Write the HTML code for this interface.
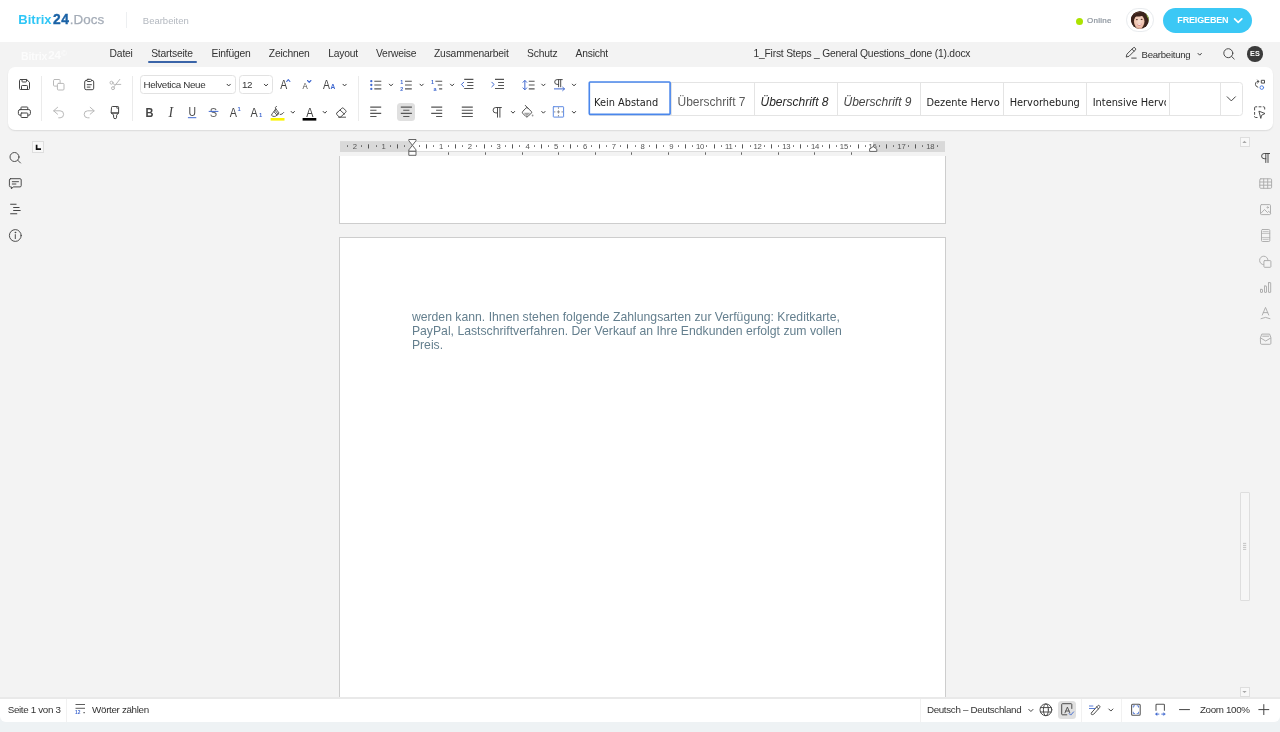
<!DOCTYPE html>
<html lang="de">
<head>
<meta charset="utf-8">
<title>1_First Steps _ General Questions_done (1).docx</title>
<style>
*{box-sizing:border-box;margin:0;padding:0}
html,body{width:1280px;height:732px;overflow:hidden;background:#eef2f4;font-family:"Liberation Sans",sans-serif;color:#333}
body{position:relative;will-change:transform}
.t{position:absolute;white-space:nowrap;line-height:1}
#hdr{position:absolute;left:0;top:0;width:1280px;height:42px;background:#fff}
#editor{position:absolute;left:0;top:42px;width:1280px;height:680px;background:#f3f3f3;border-radius:0 0 6px 6px;overflow:hidden}
#tb{position:absolute;left:8px;top:66.5px;width:1264.5px;height:63px;background:#fff;border-radius:7px;box-shadow:0 1px 1.5px rgba(0,0,0,.10)}
#status{position:absolute;left:0;top:697px;width:1280px;height:25px;background:#fff;border-top:2px solid #e9e9e9;border-radius:0 0 6px 6px}
.page{position:absolute;left:339px;width:606.5px;background:#fff;border:1px solid #cdcdcd}
.mi{font-size:10.3px;letter-spacing:-.19px;color:#333;top:49px}
.ui{font-size:9.8px;letter-spacing:-.33px;color:#333}
.box{position:absolute;border:1px solid #e2e2e2;border-radius:3.5px;background:#fff}
.sep{position:absolute;width:1px;background:#ebebeb}
.gal{position:absolute;left:588.5px;top:81.5px;width:654.5px;height:34px;border:1px solid #e4e4e4;border-radius:0 3.5px 3.5px 0;background:#fff}
.gc{position:absolute;top:81.5px;height:34px;border-left:1px solid #e4e4e4;overflow:hidden}
.gc span{position:absolute;left:5.5px;top:13px;white-space:nowrap;line-height:14px}
.g1 span{top:14.3px}
.g1{font-family:"DejaVu Sans Condensed","DejaVu Sans","Liberation Sans",sans-serif;font-size:10.9px;color:#222}
.g2{font-family:"Liberation Sans",sans-serif;font-size:12px}
svg{position:absolute;left:0;top:0;overflow:visible}
svg text{font-family:"Liberation Sans",sans-serif}
</style>
</head>
<body>
<div id="hdr"></div>
<div id="editor"></div>
<!-- header -->
<div class="t" id="logo" style="left:18.3px;top:12.8px;font-size:13px;font-weight:bold"><span style="color:#2fc6f6">Bitrix</span><span style="color:#1a62a6;font-size:13.8px;letter-spacing:.5px;margin-left:1.5px;-webkit-text-stroke:.35px #1a62a6">24</span><span style="color:#a4acb7;font-weight:normal;margin-left:.3px;font-size:13.4px;letter-spacing:.1px;-webkit-text-stroke:.25px #a4acb7">.Docs</span></div>
<div class="sep" style="left:126px;top:12px;height:16px;background:#edeff1"></div>
<div class="t" style="left:142.8px;top:15.7px;font-size:9.5px;color:#b3b8bf">Bearbeiten</div>
<div style="position:absolute;left:1076px;top:18px;width:7px;height:7px;border-radius:50%;background:#ace300"></div>
<div class="t" style="left:1087px;top:16.6px;font-size:8px;letter-spacing:.28px;-webkit-text-stroke:.22px #8e969f;color:#8e969f">Online</div>
<div style="position:absolute;left:1125.6px;top:8px;width:28.3px;height:23.7px;border-radius:11.85px;border:1.2px solid #e8ebee;background:#fff"></div>
<div style="position:absolute;left:1163px;top:8px;width:89px;height:24.5px;border-radius:12.5px;background:#3bc8f5"></div>
<div class="t" style="left:1177.3px;top:15.8px;font-size:9px;font-weight:bold;letter-spacing:-.15px;color:#fff">FREIGEBEN</div>
<!-- menu bar -->
<div class="t" style="left:21px;top:49.700px;font-size:10.5px;font-weight:bold;color:#fcfcfc;letter-spacing:-.1px">Bitrix<span style="font-size:11.5px;margin-left:1px">24</span><span style="font-size:7.5px;font-weight:normal;vertical-align:3.5px;margin-left:.5px">©</span></div>
<div class="t mi" style="left:109.6px">Datei</div>
<div class="t mi" style="left:151.2px">Startseite</div>
<div style="position:absolute;left:148px;top:61px;width:48.7px;height:2px;border-radius:1px;background:#3a64a8"></div>
<div class="t mi" style="left:211.5px">Einfügen</div>
<div class="t mi" style="left:268.8px">Zeichnen</div>
<div class="t mi" style="left:328.2px">Layout</div>
<div class="t mi" style="left:376px">Verweise</div>
<div class="t mi" style="left:434px">Zusammenarbeit</div>
<div class="t mi" style="left:527px">Schutz</div>
<div class="t mi" style="left:575.5px">Ansicht</div>
<div class="t mi" style="left:753.5px;letter-spacing:-.21px">1_First Steps _ General Questions_done (1).docx</div>
<div class="t mi" style="left:1141.6px;top:49.5px;font-size:9.6px;letter-spacing:-.27px">Bearbeitung</div>
<div style="position:absolute;left:1247px;top:46px;width:15.6px;height:15.6px;border-radius:50%;background:#3b3b3b"></div>
<div class="t" style="left:1250.1px;top:50.4px;font-size:7.3px;font-weight:bold;color:#fff">ES</div>
<!-- toolbar -->
<div id="tb"></div>
<div class="sep" style="left:41px;top:75.5px;height:45.5px"></div>
<div class="sep" style="left:132px;top:75.5px;height:45.5px"></div>
<div class="sep" style="left:358px;top:75.5px;height:45.5px"></div>
<div class="box" style="left:140px;top:75px;width:95.5px;height:19px"></div>
<div class="box" style="left:238.7px;top:75px;width:34px;height:19px"></div>
<div class="t ui" style="left:143.5px;top:79.7px">Helvetica Neue</div>
<div class="t ui" style="left:242px;top:79.7px">12</div>
<div style="position:absolute;left:397px;top:103px;width:18.2px;height:18px;border-radius:3.5px;background:#e0e0e0"></div>
<!-- style gallery -->
<div class="gal"></div>
<div class="gc g1" style="left:588.5px;width:82.5px;border:none"><span>Kein Abstand</span></div>
<div class="gc g2" style="left:671px;width:83.4px;color:#5c5c5c"><span>Überschrift 7</span></div>
<div class="gc g2" style="left:754px;width:83.4px;color:#262626;font-style:italic"><span>Überschrift 8</span></div>
<div class="gc g2" style="left:837px;width:83.4px;color:#444;font-style:italic"><span>Überschrift 9</span></div>
<div class="gc g1" style="left:920px;width:79.5px"><span>Dezente Hervorhebung</span></div>
<div class="sep" style="left:1003.2px;top:81.5px;height:34px;background:#e4e4e4"></div>
<div class="gc g1" style="left:1003.2px;width:83.4px"><span>Hervorhebung</span></div>
<div class="gc g1" style="left:1086.2px;width:80.3px"><span>Intensive Hervorhebung</span></div>
<div class="sep" style="left:1169.2px;top:81.5px;height:34px;background:#e4e4e4"></div>
<div class="sep" style="left:1220px;top:81.5px;height:34px;background:#e4e4e4"></div>

<!-- document area -->
<div style="position:absolute;left:32px;top:141px;width:12px;height:11.5px;border:1px solid #dedede;background:#f8f8f8"></div>
<div class="page" style="top:152px;height:71.8px;border-top:none"></div>
<div class="page" style="top:237px;height:461px;border-bottom:none"></div>
<div style="position:absolute;left:339px;top:152px;width:607px;height:4px;background:#f3f3f3"></div>
<div id="ruler" style="position:absolute;left:340px;top:141px;width:605px;height:11px;background:#fff;border:1px solid #dcdcdc;border-left:none;border-right:none"></div>
<div style="position:absolute;left:340px;top:141.5px;width:72.3px;height:10.3px;background:#d9d9d9"></div>
<div style="position:absolute;left:873px;top:141.5px;width:72px;height:10.3px;background:#d9d9d9"></div>
<div class="t" id="doctext" style="left:411.9px;top:311.1px;font-size:12.22px;line-height:13.75px;color:#647f8e;white-space:normal;width:470px">werden kann. Ihnen stehen folgende Zahlungsarten zur Verfügung: Kreditkarte,<br>PayPal, Lastschriftverfahren. Der Verkauf an Ihre Endkunden erfolgt zum vollen<br>Preis.</div>
<!-- scrollbar -->
<div style="position:absolute;left:1239.5px;top:137px;width:10px;height:9.5px;border:1px solid #dedede;background:#f8f8f8"></div>
<div style="position:absolute;left:1239.5px;top:686.6px;width:10px;height:10px;border:1px solid #dedede;background:#f8f8f8"></div>
<div style="position:absolute;left:1239.5px;top:491.5px;width:10px;height:109.5px;border:1px solid #dedede;background:#f6f6f6;border-radius:1px"></div>
<!-- status bar -->
<div id="status"></div>
<div class="sep" style="left:65.5px;top:698.5px;height:23.5px;background:#f1f1f1"></div>
<div class="sep" style="left:919.5px;top:698.5px;height:23.5px;background:#f1f1f1"></div>
<div class="sep" style="left:1081px;top:698.5px;height:23.5px;background:#f1f1f1"></div>
<div class="sep" style="left:1121px;top:698.5px;height:23.5px;background:#f1f1f1"></div>
<div class="t ui" style="left:7.7px;top:704.9px">Seite 1 von 3</div>
<div class="t ui" style="left:92.1px;top:704.9px">Wörter zählen</div>
<div class="t ui" style="left:926.9px;top:704.9px">Deutsch – Deutschland</div>
<div class="t ui" style="left:1199.9px;top:704.9px">Zoom 100%</div>
<div style="position:absolute;left:1058.4px;top:700.8px;width:18px;height:18px;border-radius:3.5px;background:#e0e0e0"></div>
<svg width="1280" height="732" viewBox="0 0 1280 732">
<g font-size="7.7" fill="#555" letter-spacing="-.25"><text x="354.8" y="148.9" text-anchor="middle">2</text><text x="383.5" y="148.9" text-anchor="middle">1</text><text x="441.1" y="148.9" text-anchor="middle">1</text><text x="469.8" y="148.9" text-anchor="middle">2</text><text x="498.6" y="148.9" text-anchor="middle">3</text><text x="527.4" y="148.9" text-anchor="middle">4</text><text x="556.1" y="148.9" text-anchor="middle">5</text><text x="584.9" y="148.9" text-anchor="middle">6</text><text x="613.7" y="148.9" text-anchor="middle">7</text><text x="642.5" y="148.9" text-anchor="middle">8</text><text x="671.2" y="148.9" text-anchor="middle">9</text><text x="700.0" y="148.9" text-anchor="middle">10</text><text x="728.8" y="148.9" text-anchor="middle">11</text><text x="757.5" y="148.9" text-anchor="middle">12</text><text x="786.3" y="148.9" text-anchor="middle">13</text><text x="815.1" y="148.9" text-anchor="middle">14</text><text x="843.9" y="148.9" text-anchor="middle">15</text><text x="872.6" y="148.9" text-anchor="middle">16</text><text x="901.4" y="148.9" text-anchor="middle">17</text><text x="930.2" y="148.9" text-anchor="middle">18</text></g>
<path d="M347.5 145.3v1.5M361.5 145.3v1.5M368.5 144.3v4.2M376.5 145.3v1.5M390.5 145.3v1.5M397.5 144.3v4.2M404.5 145.3v1.5M419.5 145.3v1.5M426.5 144.3v4.2M433.5 145.3v1.5M448.5 145.3v1.5M455.5 144.3v4.2M462.5 145.3v1.5M476.5 145.3v1.5M484.5 144.3v4.2M491.5 145.3v1.5M505.5 145.3v1.5M512.5 144.3v4.2M519.5 145.3v1.5M534.5 145.3v1.5M541.5 144.3v4.2M548.5 145.3v1.5M563.5 145.3v1.5M570.5 144.3v4.2M577.5 145.3v1.5M591.5 145.3v1.5M599.5 144.3v4.2M606.5 145.3v1.5M620.5 145.3v1.5M627.5 144.3v4.2M635.5 145.3v1.5M649.5 145.3v1.5M656.5 144.3v4.2M663.5 145.3v1.5M678.5 145.3v1.5M685.5 144.3v4.2M692.5 145.3v1.5M706.5 145.3v1.5M714.5 144.3v4.2M721.5 145.3v1.5M735.5 145.3v1.5M742.5 144.3v4.2M750.5 145.3v1.5M764.5 145.3v1.5M771.5 144.3v4.2M778.5 145.3v1.5M793.5 145.3v1.5M800.5 144.3v4.2M807.5 145.3v1.5M822.5 145.3v1.5M829.5 144.3v4.2M836.5 145.3v1.5M850.5 145.3v1.5M858.5 144.3v4.2M865.5 145.3v1.5M879.5 145.3v1.5M886.5 144.3v4.2M893.5 145.3v1.5M908.5 145.3v1.5M915.5 144.3v4.2M922.5 145.3v1.5M937.5 145.3v1.5" stroke="#555" stroke-width="1" fill="none" stroke-linecap="butt"/>
<path d="M448.5 152.3v2.5M485.5 152.3v2.5M522.5 152.3v2.5M558.5 152.3v2.5M595.5 152.3v2.5M631.5 152.3v2.5M668.5 152.3v2.5M705.5 152.3v2.5M741.5 152.3v2.5M778.5 152.3v2.5M814.5 152.3v2.5M851.5 152.3v2.5" stroke="#555" stroke-width=".9" fill="none"/>
<g stroke="#555" stroke-width=".9" fill="#fff" stroke-linejoin="round">
<path d="M408.8 139.5h7.2v1.2l-3.6 4.6l-3.6-4.6z"/>
<path d="M408.8 151.3v-1.4l3.6-4.6l3.6 4.6v1.4z"/>
<path d="M408.8 151.3h7.2v4h-7.2z"/>
<path d="M869.6 151.4v-2.3l3.6-2.6l3.6 2.6v2.3z"/>
</g>
</svg><svg width="1280" height="732" viewBox="0 0 1280 732" fill="none" stroke-linecap="round" stroke-linejoin="round">
<defs>
<path id="chv" d="M-1.65 -.85L0 .85L1.65 -.85" stroke="#3a3a3a" stroke-width="1" fill="none"/>
</defs>
<!-- header: avatar photo + button chevron -->
<defs>
<clipPath id="avc"><circle cx="1139.850" cy="20.050" r="8.900"/></clipPath>
<filter id="avb" x="-20%" y="-20%" width="140%" height="140%"><feGaussianBlur stdDeviation=".55"/></filter>
<radialGradient id="skin" cx=".5" cy=".45" r=".6"><stop offset="0" stop-color="#f7ddd0"/><stop offset=".7" stop-color="#eec3ae"/><stop offset="1" stop-color="#d39d86"/></radialGradient>
</defs>
<g clip-path="url(#avc)" stroke="none">
<rect x="1130" y="10" width="20" height="20" fill="#3b241b"/>
<g filter="url(#avb)">
<path d="M1144 10h7v9.500c-1.500-3.500-3.500-6.500-7-9.500z" fill="#7fae3a"/>
<path d="M1146.800 12.500c2 2.500 2.300 6.500 1.500 10.500c-1.300-3.500-2-7-1.500-10.500z" fill="#a8cf5a"/>
<ellipse cx="1139.200" cy="21.600" rx="5.300" ry="6.800" fill="url(#skin)"/>
<path d="M1136.500 27h5.500l1 4h-8z" fill="#e3b29c"/>
<path d="M1131 22c-1-6 2-10.500 8.500-10.800c5.500-.2 8.500 4 8.300 11c-1-4-2.300-6-4-7.300c-2.300 1.500-5.500 1.800-8 1.500c-1.500 1.300-2.300 3-2.800 6.600z" fill="#3b241b"/>
<path d="M1144.300 17c1.800 2 2 6.500.3 10.500l3.500-2l1-8z" fill="#3b241b"/>
<path d="M1133.300 20c-.6 2.500-.3 5 .8 7l-3-1.500z" fill="#3b241b"/>
<path d="M1144.300 11.800A8.900 8.900 0 0 1 1148.800 21.500C1148 17.500 1146.800 14.500 1144.300 11.800z" fill="#8cbf3f"/>
<path d="M1133.500 14.500q3-3 7.500-2.300q-4.500.3-7.500 2.300z" fill="#6b4a3c"/>
<ellipse cx="1136.900" cy="19.600" rx="1" ry=".55" fill="#5a3a30"/>
<ellipse cx="1141.600" cy="19.400" rx="1" ry=".55" fill="#5a3a30"/>
<path d="M1136.800 23.700q2.600 1.300 5.200-.2q-.6 2.400-2.700 2.500q-1.900 0-2.500-2.300z" fill="#d98c8c"/>
<path d="M1137.300 23.900q2.200.9 4.200-.1q-.8 1.200-2.100 1.200q-1.300 0-2.100-1.100z" fill="#fff"/>
</g>
</g>
<path d="M1234.6 18.800l3.600 3.600l3.600-3.600" stroke="#fff" stroke-width="1.700"/>
<!-- menubar right -->
<g stroke="#444" stroke-width=".95">
<path d="M1126.300 56.700l.6-2.500l6.300-6.300a1.200 1.200 0 0 1 1.800 0l.3.300a1.200 1.200 0 0 1 0 1.800l-6.300 6.300l-2.500.600z"/>
<path d="M1132 49.200l2 2"/>
<path d="M1131.700 58.100h4.500"/>
<circle cx="1228.300" cy="53.200" r="4.500"/>
<path d="M1231.600 56.500l2.600 2.500"/>
</g>
<use href="#chv" x="1199.7" y="54.300"/>
<!-- ===== toolbar row 1 left ===== -->
<g stroke="#444" stroke-width="1">
<!-- save -->
<path d="M20.500 79.500h6.200l2.800 2.800v6.200a1 1 0 0 1 -1 1h-8a1 1 0 0 1 -1 -1v-8a1 1 0 0 1 1 -1z"/>
<path d="M22 79.700v1.600a.7.700 0 0 0 .7.700h3.100a.7.700 0 0 0 .7-.7v-1.600"/>
<path d="M21.500 89.300v-3a.8.800 0 0 1 .8-.8h4.400a.8.800 0 0 1 .8.800v3"/>
<!-- print -->
<rect x="18.400" y="109.600" width="12" height="5.600" rx="1.600"/>
<path d="M21 109.400v-1.700a.7.700 0 0 1 .7-.7h5.400a.7.700 0 0 1 .7.700v1.700"/>
<rect x="21" y="113" width="6.800" height="4.500" rx=".7" fill="#fff"/>
<!-- paste -->
<rect x="84.700" y="80.400" width="9" height="9.300" rx="1.500"/>
<rect x="86.900" y="79.300" width="4.600" height="2.200" rx="1" fill="#fff"/>
<path d="M87.200 84.700h4.200M87.200 87.100h2.900"/>
<!-- format painter -->
<path d="M111.500 107.300a.8.800 0 0 1 .8-.8h5.500a.8.800 0 0 1 .8.800v5.700h-7.100z"/>
<path d="M116.800 106.600v1.600h1.700" stroke-width=".8"/>
<path d="M111.500 113h7.100l-2 2.200v2a1.500 1.500 0 0 1 -3 0v-2z"/>
</g>
<g stroke="#b9b9b9" stroke-width="1">
<!-- copy -->
<rect x="53.500" y="79.500" width="6.600" height="6.600" rx="1"/>
<rect x="57.400" y="83.400" width="6.600" height="6.600" rx="1" fill="#fff"/>
<!-- cut -->
<circle cx="111.500" cy="82.700" r="1.500"/>
<circle cx="113" cy="88.200" r="1.500"/>
<path d="M113.800 87l6-7.600M113 83.600l1.200.8h6.600"/>
<!-- undo -->
<path d="M57.600 107.300l-4 3.500l4 3.400"/>
<path d="M53.800 110.800h6.300a3.500 3.500 0 0 1 0 7h-1.400"/>
<!-- redo -->
<path d="M90.200 107.300l4 3.500l-4 3.400"/>
<path d="M94 110.800h-6.300a3.500 3.500 0 0 0 0 7h1.400"/>
</g>
<!-- font chevrons -->
<use href="#chv" x="228.700" y="85.100"/>
<use href="#chv" x="266" y="85.100"/>
<use href="#chv" x="344.600" y="85.100"/>
<use href="#chv" x="292.800" y="112.300"/>
<use href="#chv" x="324.800" y="112.300"/>
<!-- font size inc/dec/case -->
<g fill="#444" stroke="none" font-size="12">
<text transform="translate(280.3 88.900) scale(.87 1)">A</text>
<text transform="translate(302.400 88.600) scale(.9 1)" font-size="8.700">A</text>
<text transform="translate(323 88.900) scale(.87 1)">A</text>
<text x="330.600" y="88.900" font-size="7.200" fill="#4069d0" font-weight="bold" transform="translate(330.600 88.900) scale(.92 1) translate(-330.600 -88.900)">A</text>
</g>
<g stroke="#4069d0" stroke-width="1.150">
<path d="M286.700 81.500l1.600-1.900l1.600 1.900"/>
<path d="M307.500 80.500l1.700 1.800l1.700-1.800"/>
</g>
<!-- B I U S A A -->
<g fill="#444" stroke="none" font-size="12.300">
<text transform="translate(145.600 116.500) scale(.88 1)" font-weight="bold" font-size="12.500">B</text>
<text x="170.800" y="116.500" text-anchor="middle" style="font-family:'Liberation Serif',serif;font-style:italic;font-size:13.8px">I</text>
<text transform="translate(192.200 116.300) scale(.85 1)" text-anchor="middle">U</text>
<text transform="translate(213.500 116.500) scale(.9 1)" text-anchor="middle" fill="#666">S</text>
<text transform="translate(229.800 116.500) scale(.88 1)">A</text>
<text transform="translate(250.600 116.500) scale(.88 1)">A</text>
<text transform="translate(309.800 116.500) scale(.88 1)" text-anchor="middle">A</text>
<text x="237.500" y="111" font-size="5.800" font-weight="bold" fill="#4069d0">1</text>
<text x="259" y="116.900" font-size="5.800" font-weight="bold" fill="#4069d0">1</text>
</g>
<path d="M188.300 117.700h7.600M209.100 111.400h8.900" stroke="#4069d0" stroke-width="1"/>
<rect x="270.600" y="118" width="13.900" height="2.600" fill="#fbf300"/>
<rect x="302.600" y="118" width="13.700" height="2.600" fill="#000"/>
<!-- highlighter -->
<g stroke="#444" stroke-width=".9">
<path d="M276.500 106.300L275.300 107.700L276 109.100"/>
<path d="M276 109.100L279.100 113L277 115.200C275.500 116.800 273 117 271.400 115.200C272 113.800 273 112.500 273.900 111.600Z"/>
<path d="M273.900 111.600L277 115.200M275 110.300L278.100 114.100"/>
<path d="M280.200 114.500C281.500 114.600 282.800 113.600 283.700 112.500"/>
<!-- eraser -->
<rect x="-4.600" y="-2.800" width="9.200" height="5.600" rx="1.300" transform="translate(341.300 112.600) rotate(-43)"/>
<path d="M340.200 110.200L344.400 114.100M338.600 117.200h7"/>
</g>
<!-- ===== lists ===== -->
<g stroke="#555" stroke-width="1.100" stroke-linecap="butt">
<path d="M374.300 81.200h7M374.300 85h7M374.300 88.900h7"/>
<path d="M405 81.200h6.800M405 85h6.800M405 88.900h6.800"/>
<path d="M435.400 81.200h6.800M437.800 85h4.400M439.100 88.900h3.100"/>
<path d="M464.200 79.400h9.200M467.200 82.500h6.200M467.200 85.500h6.200M464.200 88.500h9.200"/>
<path d="M495 79.400h9M498.100 82.500h5.900M498.100 85.500h5.900M495 88.500h9"/>
<path d="M528.800 81.200h5.800M528.800 85h5.800M528.800 88.900h5.800"/>
<!-- align -->
<path d="M370.200 107.100h11M370.200 110.300h6.300M370.200 113.400h11M370.200 116.500h6.300"/>
<path d="M400.800 107.100h11.100M403.200 110.300h6.200M400.800 113.400h11.100M403.200 116.500h6.200"/>
<path d="M431.200 107.100h11M436.100 110.300h6.100M431.200 113.400h11M436.100 116.500h6.100"/>
<path d="M461.800 107.100h11M461.800 110.300h11M461.800 113.400h11M461.800 116.500h11"/>
</g>
<g fill="#4069d0" stroke="none">
<circle cx="371.300" cy="81.200" r="1.150"/><circle cx="371.300" cy="85" r="1.150"/><circle cx="371.300" cy="88.900" r="1.150"/>
<text x="400.300" y="83.500" font-size="5.300" font-weight="bold">1</text>
<text x="400.300" y="90.700" font-size="5.300" font-weight="bold">2</text>
<text x="431.100" y="83.500" font-size="5.300" font-weight="bold">1</text>
<text x="433.400" y="90.500" font-size="5.400" font-weight="bold">a</text>
</g>
<g stroke="#4069d0" stroke-width="1">
<path d="M463.700 82.200l-2.300 2.300l2.300 2.300"/>
<path d="M491.800 82.200l2.300 2.300l-2.300 2.300"/>
<path d="M524.850 80.800v8.600M523 82.300l1.850-1.900l1.850 1.900M523 87.900l1.850 1.900l1.850-1.900"/>
<path d="M554.400 88.900h10M562.700 87.200l1.800 1.700l-1.800 1.700"/>
<rect x="553.300" y="106.700" width="10.300" height="10.400" rx=".5" stroke="#5584e0" stroke-width=".95"/>
</g>
<use href="#chv" x="391" y="85"/>
<use href="#chv" x="421.600" y="85"/>
<use href="#chv" x="452.100" y="85"/>
<use href="#chv" x="543.400" y="85"/>
<use href="#chv" x="574" y="85"/>
<use href="#chv" x="513" y="112.300"/>
<use href="#chv" x="543.400" y="112.300"/>
<use href="#chv" x="574" y="112.300"/>
<!-- pilcrows -->
<g stroke="#444" stroke-width=".95">
<path d="M562.300 79.600h-5.200a2.400 2.400 0 0 0 0 4.800h1.500M558.600 79.600v7.200M560.700 79.600v7.200"/>
<path d="M501.400 107.500h-5.600a2.700 2.700 0 0 0 0 5.400h1.700M497.500 107.500v9.700M499.900 107.500v9.700"/>
<!-- bucket -->
<path d="M526.100 107.900a1.100 1.100 0 0 1 1.600 0l3.600 3.600a1.100 1.100 0 0 1 0 1.600l-3.500 3.500a1.300 1.300 0 0 1 -1.800 0l-3.300-3.300a1.300 1.300 0 0 1 0-1.800z"/>
<path d="M525.300 105.400l2.800 3"/>
<path d="M523.800 112.800h6.500l-3 3a.8.800 0 0 1 -1 0z" fill="#a5a5a5" stroke="none"/>
<circle cx="532.600" cy="115.500" r=".9" fill="#999" stroke="none"/>
</g>
<path d="M558.450 107.300v1.500M558.450 110.300v3.200M558.450 115v1.500M553.900 111.900h1.500M556.900 111.900h3.100M561.500 111.900h1.500" stroke="#777" stroke-width=".8" stroke-linecap="butt"/>
<rect x="589.300" y="82" width="80.800" height="32.300" rx=".8" stroke="#4a87ec" stroke-width="1.650" fill="none"/>
<!-- gallery chevron + right icons -->
<path d="M1227.200 96.800l4.100 4.100l4.100-4.100" stroke="#444" stroke-width="1"/>
<g stroke="#444" stroke-width=".95">
<path d="M1257.800 87.200a3.100 3.100 0 0 1 -.8-5.700h1.400M1257.500 80l1.500 1.500l-1.500 1.500"/>
<rect x="1261.700" y="80.300" width="2.800" height="2.800"/>
<circle cx="1261.800" cy="87.600" r="1.800" stroke="#4a7be0"/>
<path d="M1254.600 110v-2.200a1 1 0 0 1 1-1h1.200M1259 106.800h2M1263.200 106.800h.5a1 1 0 0 1 1 1v1.300M1254.600 112.400v2M1254.600 116.500v0a1 1 0 0 0 1 1h1.500"/>
<path d="M1259.300 111.300l5.700 2.200l-3.500 1.800l-.6 2.700z"/>
</g>
</svg>
<svg width="1280" height="732" viewBox="0 0 1280 732" fill="none" stroke-linecap="round" stroke-linejoin="round">
<!-- tab L -->
<path d="M36.600 144.800v4.300h4.400" stroke="#111" stroke-width="1.700" stroke-linecap="butt" stroke-linejoin="miter"/>
<!-- left sidebar -->
<g stroke="#444" stroke-width=".95">
<circle cx="14.500" cy="157" r="4.500"/><path d="M17.800 160.300l2.700 2.700"/>
<path d="M10.600 178.700h9.400a1.200 1.200 0 0 1 1.200 1.200v5.800a1.200 1.200 0 0 1 -1.200 1.200h-6.800l-1.800 2v-2h-.8a1.200 1.200 0 0 1 -1.200-1.200v-5.800a1.200 1.200 0 0 1 1.200-1.200z"/>
<path d="M12.300 181.700h6.200M12.300 184h3.600"/>
<path d="M10.200 204.300h6.300M13.200 207.400h6.300M13.200 210.500h7.400M10.200 213.700h7" stroke-width="1.050" stroke-linecap="butt"/>
<circle cx="15.300" cy="235.500" r="5.900"/>
<path d="M15.300 234.600v4"/><circle cx="15.300" cy="232.500" r=".4" fill="#444"/>
</g>
<!-- right sidebar -->
<g stroke="#444" stroke-width=".95">
<path d="M1269.600 153.500h-5.400a2.600 2.600 0 0 0 0 5.200h1.600M1265.800 153.500v9M1268 153.500v9"/>
</g>
<g stroke="#acacac" stroke-width=".95">
<rect x="1259.800" y="178.800" width="11.800" height="9.500" rx="1"/>
<path d="M1259.800 182h11.800M1259.800 185.200h11.800M1263.700 178.800v9.500M1267.700 178.800v9.500"/>
<rect x="1260.500" y="204.600" width="10" height="10" rx="1"/>
<path d="M1260.700 213.500l3.800-4l3 3l1.200-1.200l1.700 1.700"/><circle cx="1267.700" cy="207.400" r=".7"/>
<rect x="1261.500" y="229.500" width="8.300" height="12" rx="1"/>
<path d="M1263 231.600h5.300M1263 239.400h5.300M1261.700 233.400h8M1261.700 237.600h8" stroke-width=".7"/>
<circle cx="1263.800" cy="260.400" r="4.200"/>
<rect x="1263.900" y="260.600" width="7" height="6.700" rx=".8" fill="#f3f3f3"/>
<rect x="1260.500" y="289.400" width="2" height="3" rx=".3"/><rect x="1264.500" y="286" width="2" height="6.400" rx=".3"/><rect x="1268.500" y="282.600" width="2.200" height="9.800" rx=".3"/>
<path d="M1262.300 315l3.200-7.600l3.200 7.600M1263.300 312.600h4.400M1261 318.600q4.500-2.600 9 0"/>
<path d="M1260.500 337.600l1.300-3.500h7.800l1.300 3.500v5.700a1 1 0 0 1 -1 1h-8.400a1 1 0 0 1 -1-1z"/>
<path d="M1260.700 338l5 3l5-3M1262.700 336.200h6"/>
</g>
<!-- scrollbar arrows / grip -->
<path d="M1242.300 143l2.200-2.200l2.200 2.200z" fill="#a8a8a8" stroke="none"/>
<path d="M1242.300 690.900l2.200 2.200l2.200-2.200z" fill="#a8a8a8" stroke="none"/>
<path d="M1243 543.400h3.200M1243 545.400h3.200M1243 547.400h3.200M1243 549.400h3.200" stroke="#bdbdbd" stroke-width=".9" stroke-linecap="butt"/>
<!-- status bar -->
<g stroke="#555" stroke-width=".95" stroke-linecap="butt">
<path d="M75.500 704.500h9.500M75.500 708.300h9.500M83.300 712.700h1.700"/>
</g>
<text x="75" y="714.300" font-size="4.800" font-weight="bold" fill="#4069d0" font-family="Liberation Sans,sans-serif" letter-spacing=".2">12</text>
<path d="M1028.800 709.400l2.100 2.100l2.100-2.100" stroke="#444" stroke-width="1"/>
<g stroke="#444" stroke-width=".95">
<circle cx="1045.900" cy="709.800" r="5.900"/>
<ellipse cx="1045.900" cy="709.800" rx="2.500" ry="5.900"/>
<path d="M1040.600 707.600h10.600M1040.600 712h10.600"/>
<path d="M1071.800 708.500v-4a.8.800 0 0 0 -.8-.8h-8.500a.8.800 0 0 0 -.8.800v9.500a.8.800 0 0 0 .8.800h4.300"/>
<path d="M1065 712.800l2.400-5.700l2.400 5.700M1065.800 711h3.200" stroke-width=".85"/>
<path d="M1069.200 713.600l1.500 1.500l2.900-3.200" stroke="#4069d0"/>
<path d="M1108.800 709l2.050 2.050l2.050-2.050" stroke-width="1"/>
<path d="M1091.900 712.300L1097.600 705.900A1.300 1.300 0 0 1 1099.600 707.600L1093.800 714.100C1092.800 714.700 1091.700 714.900 1091.300 714.300C1091 713.700 1091.400 712.900 1091.900 712.300M1096.600 707L1098.500 708.800"/>
<path d="M1089 706h4.300M1089 708.500h6.300" stroke="#4069d0" stroke-linecap="butt" stroke-width=".85"/>
<rect x="1131.600" y="704.200" width="8.600" height="11" rx="1" stroke-width="1.050" stroke="#555"/>
<path d="M1156 710.800v-5.800a.8.800 0 0 1 .8-.8h6.800a.8.800 0 0 1 .8.800v5.800" stroke-width="1.050" stroke="#555" stroke-linecap="butt"/>
<path d="M1179.500 709.600h10M1258.800 709.600h10M1263.800 704.600v10" stroke-width="1"/>
</g>
<g stroke="#4069d0" stroke-width=".8">
<path d="M1133.300 707.200v-1.400h1.400M1138.500 707.200v-1.400h-1.400M1133.300 712.200v1.400h1.400M1138.500 712.200v1.400h-1.400"/>
<path d="M1156 714.100h3.300M1161.300 714.100h3.300" stroke-width=".9" stroke-linecap="butt"/><path d="M1157 712.700l-1.900 1.400l1.900 1.400zM1163.600 712.700l1.900 1.400l-1.900 1.400z" fill="#4069d0" stroke-width=".3"/>
</g>
</svg>

</body>
</html>
